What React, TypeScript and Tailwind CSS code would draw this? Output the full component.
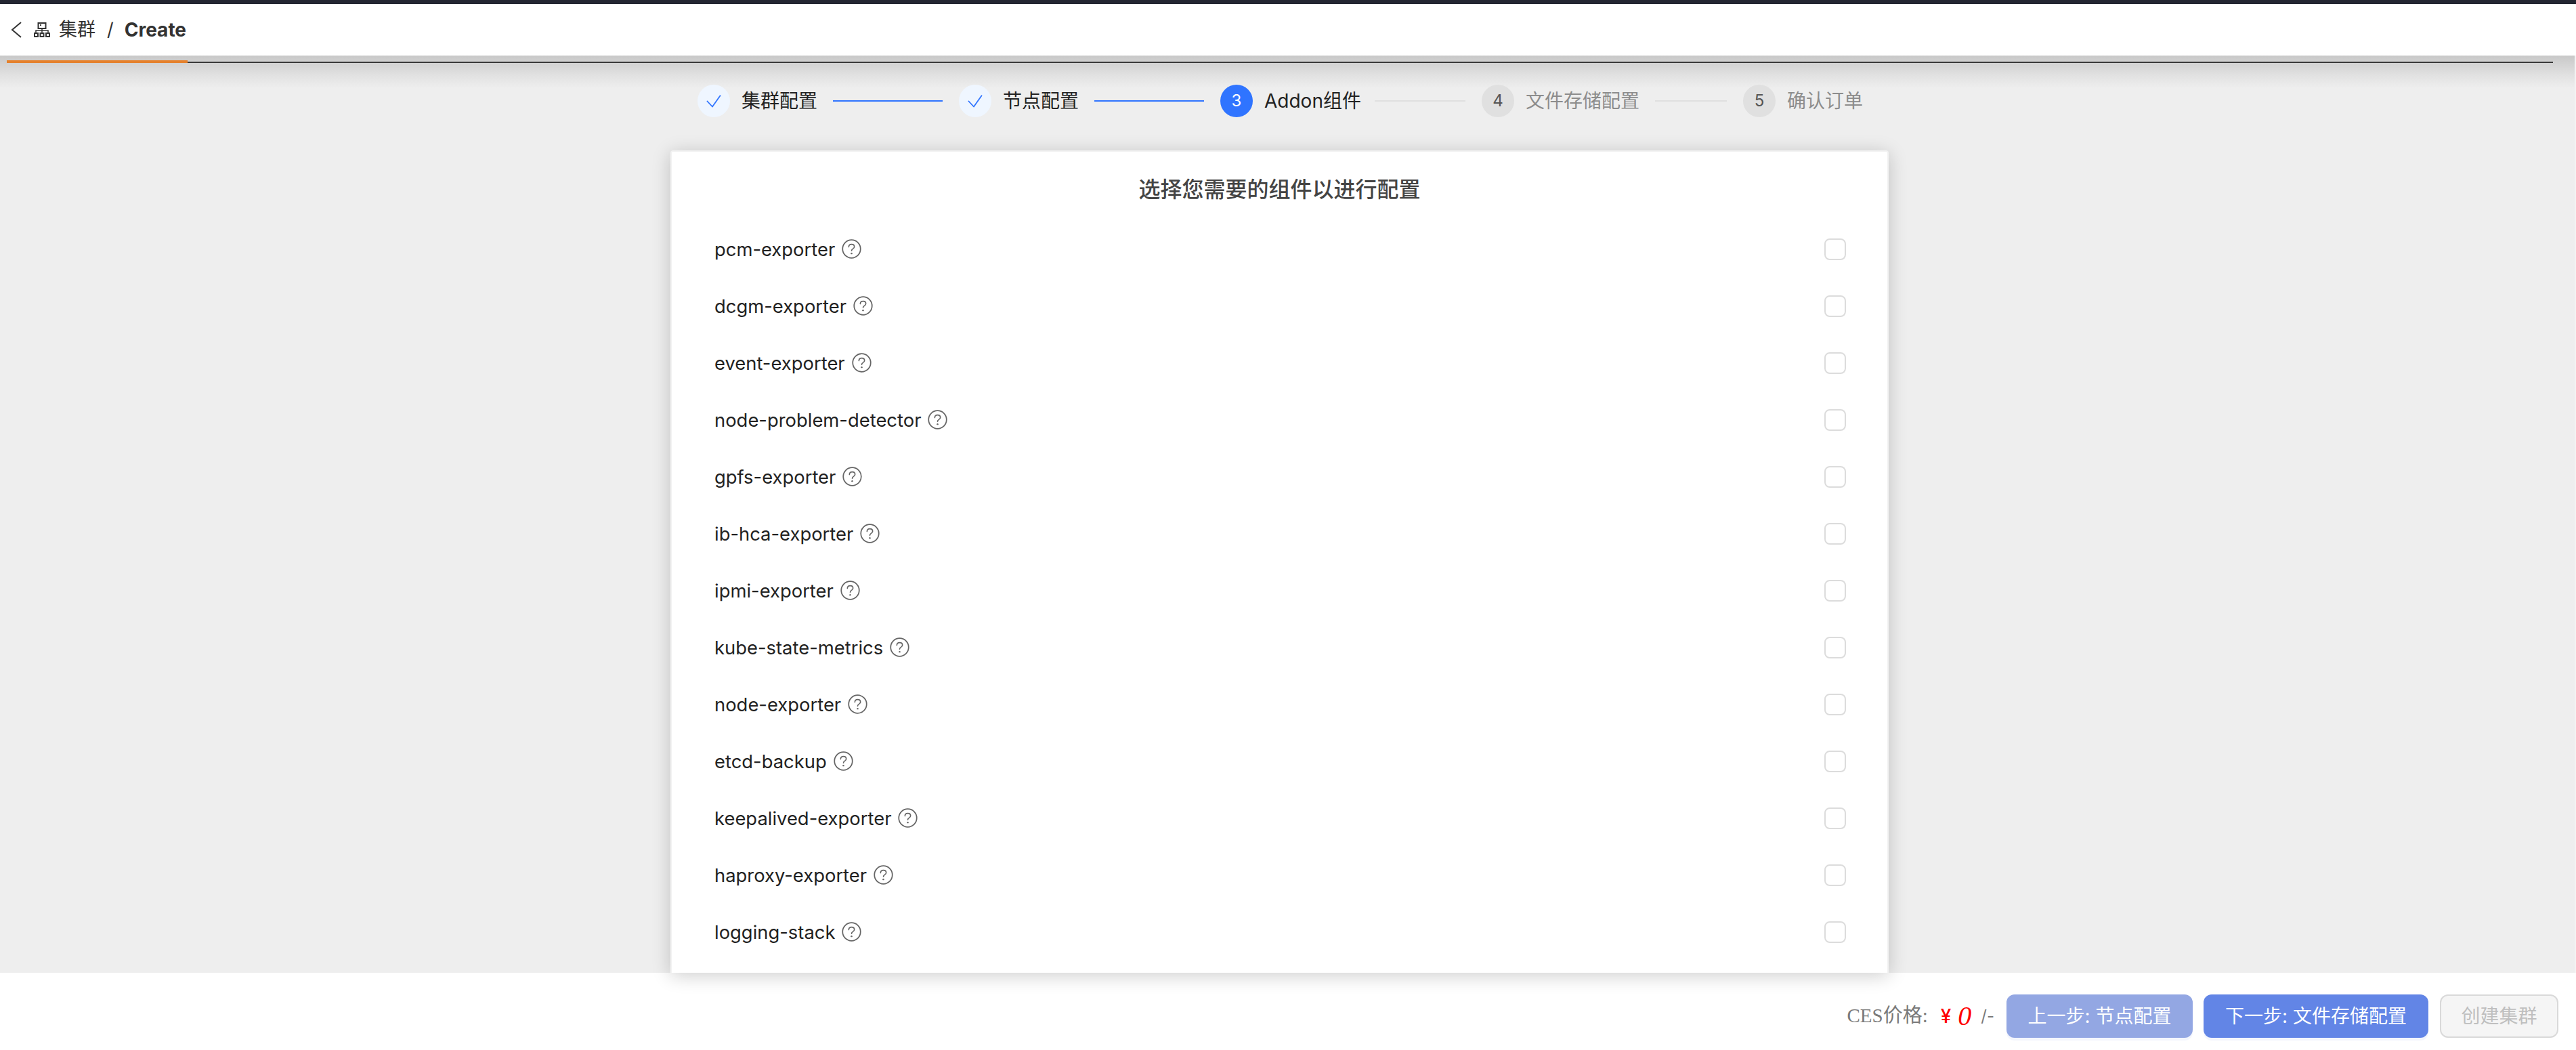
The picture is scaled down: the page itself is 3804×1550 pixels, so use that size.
import React from "react";

const items = [
  "pcm-exporter",
  "dcgm-exporter",
  "event-exporter",
  "node-problem-detector",
  "gpfs-exporter",
  "ib-hca-exporter",
  "ipmi-exporter",
  "kube-state-metrics",
  "node-exporter",
  "etcd-backup",
  "keepalived-exporter",
  "haproxy-exporter",
  "logging-stack",
];

const font = { fontFamily: 'Inter, "Noto Sans CJK SC", sans-serif' };

function Check() {
  return (
    <svg width="22" height="19" viewBox="0 0 22 19" fill="none" stroke="#2f74ff" strokeWidth="1.8">
      <path d="M1.5 9.5 L9 17.5 L20.5 1.2" strokeLinecap="round" strokeLinejoin="round" />
    </svg>
  );
}

function Help() {
  return (
    <svg width="29" height="29" viewBox="0 0 28 28" fill="none" className="ml-[10px] shrink-0 -mt-[2px]">
      <circle cx="14" cy="14" r="12.8" stroke="#666" strokeWidth="1.7" />
      <path d="M10 11.2c0-2.4 1.8-3.9 4-3.9s4 1.4 4 3.5c0 1.6-.9 2.4-2.1 3.1-1.2.7-1.9 1.3-1.9 2.7" stroke="#666" strokeWidth="1.6" strokeLinecap="round" />
      <circle cx="14" cy="20.4" r="1.2" fill="#666" />
    </svg>
  );
}

function ClusterIcon() {
  return (
    <svg width="24" height="24" viewBox="0 0 24 24" fill="none" stroke="#333" strokeWidth="2">
      <rect x="6.5" y="2" width="11" height="8" />
      <path d="M9 5h2" />
      <path d="M3 16v-3h18v3M12 10v6" strokeWidth="1.5" />
      <rect x="1" y="17" width="5" height="5" />
      <rect x="9.5" y="17" width="5" height="5" />
      <rect x="18" y="17" width="5" height="5" />
    </svg>
  );
}

function Circle({ state, n }: { state: "done" | "active" | "todo"; n?: number }) {
  if (state === "done")
    return (
      <div className="w-[48px] h-[48px] rounded-full bg-[#eff6ff] flex items-center justify-center shrink-0">
        <Check />
      </div>
    );
  if (state === "active")
    return (
      <div className="w-[48px] h-[48px] rounded-full bg-[#2f74ff] text-white text-[24px] flex items-center justify-center shrink-0">
        {n}
      </div>
    );
  return (
    <div className="w-[48px] h-[48px] rounded-full bg-[#e0e0e0] text-[#555] text-[24px] flex items-center justify-center shrink-0">
      {n}
    </div>
  );
}

function Stepper() {
  return (
    <div className="flex items-center h-[48px] text-[28px] leading-[48px]">
      <Circle state="done" />
      <span className="ml-[17px] w-[110px] text-[#222] whitespace-nowrap">集群配置</span>
      <div className="ml-[25px] w-[162px] h-[2px] bg-[#2f74ff]" />
      <div className="ml-[24px]"><Circle state="done" /></div>
      <span className="ml-[17px] w-[110px] text-[#222] whitespace-nowrap">节点配置</span>
      <div className="ml-[25px] w-[162px] h-[2px] bg-[#2f74ff]" />
      <div className="ml-[24px]"><Circle state="active" n={3} /></div>
      <span className="ml-[17px] w-[138px] text-[#222] whitespace-nowrap">Addon组件</span>
      <div className="ml-[25px] w-[134px] h-[2px] bg-[#e0e0e0]" />
      <div className="ml-[24px]"><Circle state="todo" n={4} /></div>
      <span className="ml-[17px] w-[166px] text-[#8c8c8c] whitespace-nowrap">文件存储配置</span>
      <div className="ml-[25px] w-[106px] h-[2px] bg-[#e0e0e0]" />
      <div className="ml-[24px]"><Circle state="todo" n={5} /></div>
      <span className="ml-[17px] w-[110px] text-[#8c8c8c] whitespace-nowrap">确认订单</span>
    </div>
  );
}

export default function App() {
  return (
    <div className="w-[3804px] h-[1550px] flex flex-col overflow-hidden bg-white" style={font}>
      <div className="h-[6px] bg-[#232632] shrink-0" />
      <header className="h-[76px] shrink-0 bg-white flex items-center pl-[16px] text-[27px] text-[#333]">
        <svg width="16" height="26" viewBox="0 0 16 26" fill="none" stroke="#333" strokeWidth="2">
          <path d="M15 2 L2 13 L15 24" />
        </svg>
        <span className="ml-[18px] flex"><ClusterIcon /></span>
        <span className="ml-[13px]">集群</span>
        <span className="ml-[17px]">/</span>
        <span className="ml-[16px] font-bold text-[28px]">Create</span>
      </header>
      <main className="flex-1 min-h-0 flex flex-col items-center bg-[linear-gradient(to_bottom,#c8c8c8_0px,#e2e2e2_30px,#eeeeee_48px)] relative border-r-2 border-[#f4f4f4] pr-[23px]">
        <div className="absolute left-[10px] right-[32px] top-[9px] h-[2px] bg-[#3a3a3a]" />
        <div className="absolute left-[10px] w-[267px] top-[7px] h-[4px] bg-[#e5812c]" />
        <div className="mt-[43px]">
          <Stepper />
        </div>
        <section className="mt-[49px] w-[1799px] flex-1 min-h-0 bg-white border-t-2 border-x-2 border-[#f2f2f2] rounded-t-[4px] shadow-[0_4px_28px_rgba(0,0,0,0.2)] overflow-hidden pl-[63px] pr-[61px]">
          <h2 className="text-center text-[32px] font-medium text-[#444] leading-[48px] mt-[32px] -ml-[2px]">
            选择您需要的组件以进行配置
          </h2>
          <ul className="mt-[22px]">
            {items.map((name) => (
              <li key={name} className="h-[84px] flex items-center justify-between">
                <span className="flex items-center text-[27.4px] text-[#222] leading-[40px]">
                  {name}
                  <Help />
                </span>
                <span className="w-[32px] h-[32px] rounded-[8px] border-2 border-[#dcdcdc] bg-white" />
              </li>
            ))}
          </ul>
        </section>
      </main>
      <footer className="h-[114px] shrink-0 bg-white flex items-center justify-end pr-[26px] pt-[14px]">
        <span className="text-[29px] text-[#7a7a7a]" style={{ fontFamily: '"Liberation Serif", "Noto Sans CJK SC", serif' }}>CES价格:</span>
        <span className="ml-[19px] text-[28px] font-medium text-[#ff0000]">¥</span>
        <span className="ml-[10px] text-[40px] italic text-[#ff0000]" style={{ fontFamily: '"Liberation Serif", serif' }}>0</span>
        <span className="ml-[14px] text-[24px] text-[#7a7a7a]">/-</span>
        <button className="ml-[18px] w-[275px] h-[64px] rounded-[12px] bg-[#93a7e3] text-white text-[28px] shadow-[0_4px_0_rgba(98,133,230,0.07)]">上一步: 节点配置</button>
        <button className="ml-[16px] w-[332px] h-[64px] rounded-[12px] bg-[#6285e6] text-white text-[28px] shadow-[0_4px_0_rgba(98,133,230,0.07)]">下一步: 文件存储配置</button>
        <button className="ml-[17px] w-[175px] h-[64px] rounded-[12px] bg-[#f5f5f5] border-2 border-[#d9d9d9] text-[#bfbfbf] text-[28px]">创建集群</button>
      </footer>
    </div>
  );
}
